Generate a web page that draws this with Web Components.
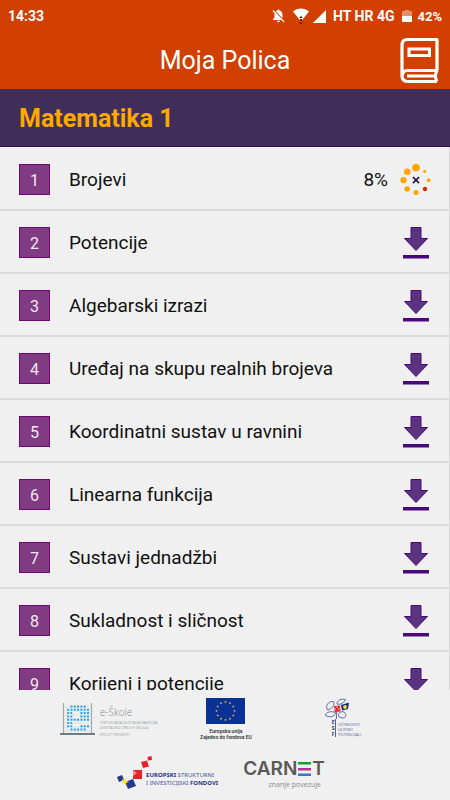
<!DOCTYPE html>
<html lang="hr">
<head>
<meta charset="utf-8">
<meta name="viewport" content="width=device-width, initial-scale=1">
<title>Moja Polica</title>
<style>
  html, body { margin: 0; height: 100%; }
  body { font-family: Roboto, "Liberation Sans", sans-serif; background: #f0f0f0; color: #111; }
</style>
</head>
<body>
<shelf-app></shelf-app>
<script>
const define = (name, html, setup) => {
  const template = document.createElement('template');
  template.innerHTML = html;
  customElements.define(name, class extends HTMLElement {
    constructor() {
      super();
      this.attachShadow({ mode: 'open' }).append(template.content.cloneNode(true));
    }
    connectedCallback() { if (setup) setup(this, this.shadowRoot); }
  });
};

define('status-bar', `
<style>
  :host { display: flex; align-items: center; justify-content: space-between; height: 32px; padding: 0 8px; color: #fff; font-size: 14px; font-weight: 700; }
  .right { display: flex; align-items: center; }
  svg { display: block; }
  .bell { margin-right: 8px; }
  .wifi { margin-right: 4px; }
  .cell { margin-right: 7px; }
  .bat { margin: 0 5px 0 8px; }
  .pct { font-size: 13px; }
</style>
<span>14:33</span>
<div class="right">
  <svg class="bell" width="13" height="14" viewBox="0 0 13 14"><path fill="#fff" d="M6.5 0.5c.7 0 1 .5 1 1.100C9.600 2.100 10.500 4 10.500 6v3.200L3.600 2.300c.5-.4 1.200-.6 1.900-.8 0-.6.300-1 1-1zM2.700 3.900 9.700 11H1v-1l1.500-1.500V6c0-.8.050-1.500.2-2.100zM5 11.700h3c0 1-.7 1.600-1.500 1.600S5 12.700 5 11.700z"/><path d="M.8 1.500 12.200 13" stroke="#fff" stroke-width="1.100"/></svg>
  <svg class="wifi" width="16" height="18" viewBox="0 0 16 18"><path fill="#fff" d="M0 4.500C4.500.5 11.500.5 16 4.500L8 14.500z"/><path fill="#642000" d="M6 11 8 9l2 2zM6 15.500h4l-2 2.500zM7 12h2v2H7z"/></svg>
  <svg class="cell" width="13" height="13" viewBox="0 0 13 13"><path fill="#fff" d="M13 0v13H0z"/></svg>
  <span>HT HR 4G</span>
  <svg class="bat" width="10" height="14" viewBox="0 0 10 14"><path fill="#e48d69" d="M3 1h4v1h3v5H0V2h3z"/><path fill="#fff" d="M0 7h10v6H0z"/></svg>
  <span class="pct">42%</span>
</div>`);

define('app-header', `
<style>
  :host { display: block; background: #d14000; color: #fff; }
  .bar { display: grid; grid-template-columns: 1fr auto 1fr; align-items: center; height: 57px; padding: 0 10px; }
  h1 { grid-column: 2; margin: 0; font-size: 25px; font-weight: 400; line-height: 58px; }
  button { justify-self: end; border: 0; padding: 0; background: none; color: inherit; display: block; }
  svg { display: block; }
</style>
<status-bar></status-bar>
<div class="bar">
  <h1><slot></slot></h1>
  <button aria-label="Polica"><svg width="40" height="48" viewBox="0 0 40 48" fill="none" stroke="#fff" stroke-width="3.200" stroke-linejoin="round">
    <path d="M37 33V2.500H7.500Q2 2.500 2 8v30.500Q2 44.500 7.500 44.500H37"/>
    <path d="M2.500 38.500Q2.500 33.500 7.500 33.500H37Q34 39 37 44.500M7 39H35.500" stroke-width="3"/>
    <path d="M9 12h20.500v6.500H9z" stroke-width="3" stroke-linejoin="miter"/></svg></button>
</div>`);

define('subject-bar', `
<style>
  :host { display: block; background: #402e5a; border-bottom: 1px solid #2c0c4a; padding: 2px 19px 0; color: #ffa800; }
  h2 { margin: 0; font-size: 25px; line-height: 55px; font-weight: 700; }
</style>
<h2><slot></slot></h2>`);

define('download-button', `
<style>
  :host { display: block; }
  button { display: block; border: 0; padding: 0; background: none; }
  svg { display: block; }
</style>
<button aria-label="Preuzmi"><svg width="26" height="32" viewBox="0 0 26 32"><path fill="#5b3480" stroke="#4b087c" d="M8 .5h10V11.500h6.500L13 23.500 1.500 11.500H8z"/><path fill="#4b087c" d="M0 28h26v3.500H0z"/></svg></button>`);

define('download-progress', `
<style>
  :host { display: flex; align-items: center; gap: 12px; font-size: 19px; }
  button { display: block; border: 0; padding: 0; background: none; }
  svg { display: block; }
</style>
<span><slot></slot></span>
<button aria-label="Prekini preuzimanje"><svg width="32" height="32" viewBox="0 0 32 32">
  <g fill="#ffa500"><circle cx="16" cy="3.700" r="3.800"/><circle cx="7.200" cy="7.700" r="3.300"/><circle cx="3.500" cy="16.200" r="3.100"/><circle cx="7.200" cy="25" r="2.800"/><circle cx="16" cy="28.600" r="2.500"/><circle cx="28.700" cy="16.200" r="1.900"/><circle cx="24.700" cy="7.400" r="1.600"/></g>
  <circle cx="25" cy="25" r="2.200" fill="#d52b00"/>
  <path d="m13 13.200 6 6m0-6-6 6" stroke="#2b174d" stroke-width="1.700"/></svg></button>`);

define('chapter-row', `
<style>
  :host { display: flex; align-items: center; box-sizing: border-box; flex: none; height: 63px; padding: 2px 20px 0 19px; border-bottom: 2px solid #dcdcdc; }
  .num { box-sizing: border-box; width: 31px; height: 31px; line-height: 31px; border: 1px solid #6d0876; background: #803b82; color: #f3e8f3; text-align: center; font-size: 16px; }
  .name { flex: 1; margin-left: 19px; font-size: 19px; line-height: 24px; }
  .busy { margin-right: -3px; }
</style>
<span class="num"></span><span class="name"><slot></slot></span>`, (host, root) => {
  root.querySelector('.num').textContent = host.getAttribute('number');
  const progress = host.getAttribute('progress');
  const action = document.createElement(progress ? 'download-progress' : 'download-button');
  if (progress) { action.textContent = progress; action.className = 'busy'; }
  root.append(action);
});

define('chapter-list', `
<style>
  :host { display: flex; flex-direction: column; flex: 1; min-height: 0; overflow: hidden; box-sizing: border-box; padding-top: 1px; border-right: 1px solid #d8d8d8; }
</style>
<slot></slot>`);

define('eskole-logo', `
<style>
  :host { display: flex; gap: 5px; color: #9a9da0; font-family: "Open Sans", sans-serif; }
  svg { display: block; flex: none; }
  b { display: block; font-size: 10px; line-height: 12px; font-weight: 300; color: #888c90; margin: 3px 0 2px; }
  p { margin: 0; font-size: 4px; line-height: 5px; white-space: nowrap; }
  p + p { margin-top: 2px; }
</style>
<svg width="35" height="33" viewBox="0 0 35 33"><path d="M4 4h27M4 8h27M4 12h27M4 16h27M4 20h27M4 24h27M4 28h27" stroke="#d5dadd" stroke-width=".7"/><path d="M3.500 0v30M31.500 0v30" stroke="#a3a9ad" stroke-width="1.200"/><path fill="#6f7b82" d="M0 30h35v2H0z"/><g fill="none" stroke="#2ba2dd" stroke-width="2" stroke-dasharray="2 1.300"><path d="M10.500 3.500H26M7.200 6.800H29M7.200 10.100h5M20.400 10.100H29M7.200 13.400h5M20.400 13.400H29M7.200 16.700H29M7.200 20h5M7.200 23.300h5M20.400 23.300H29M10.500 26.600H26"/></g></svg>
<div><b>e-Škole</b><p>USPOSTAVA SUSTAVA RAZVOJA<br>DIGITALNO ZRELIH ŠKOLA</p><p>(PILOT PROJEKT)</p></div>`);

define('eu-logo', `
<style>
  :host { display: flex; flex-direction: column; align-items: center; gap: 4px; font: 600 5px/6px Roboto, sans-serif; color: #333; text-align: center; white-space: nowrap; }
  svg { display: block; }
</style>
<svg width="39" height="26" viewBox="0 0 39 26"><path fill="#0a3296" d="M0 0h39v26H0z"/><g class="stars" fill="#f5c63c"></g></svg>
<div>Europska unija<br>Zajedno do fondova EU</div>`, (host, root) => {
  const star = (x, y) => {
    const points = Array.from({ length: 10 }, (_, i) => {
      const a = (i * 36 - 90) * Math.PI / 180, r = i % 2 ? .6 : 1.300;
      return (x + r * Math.cos(a)) + ',' + (y + r * Math.sin(a));
    });
    return '<polygon points="' + points.join(' ') + '"/>';
  };
  root.querySelector('.stars').innerHTML = Array.from({ length: 12 }, (_, i) =>
    star(19.500 + 9 * Math.cos(i * Math.PI / 6), 13 + 9 * Math.sin(i * Math.PI / 6))).join('');
});

define('esf-logo', `
<style>
  :host { display: block; width: 36px; font-family: "Open Sans", sans-serif; color: #59639b; }
  svg { display: block; }
  .text { display: flex; line-height: 5px; font-size: 4px; white-space: nowrap; }
  .esf { padding-left: 6px; width: 5px; text-align: center; font-size: 5px; font-weight: 700; color: #29367f; line-height: 6px; }
  .words { border-left: 1px solid #59639b; padding: 3px 0 0 2px; }
</style>
<svg width="26" height="21" viewBox="0 0 26 21"><g fill="none" stroke="#3d4a8b" stroke-width=".8"><path d="M2.500 12C0 8 3 3 8.500 3.500 10 7 7 11 2.500 12zM12 6c0-4 4-5.500 8.500-4.500C19 5 16 7 12 6zM0 17c3-4 7-4 11-2-2 4-7 5-11 2zM14 19c-2-4 2-6 5-5 3 2 2 5 0 6-3 0-4-1-5-1zM11.500 14v7"/></g><path fill="#e7262b" d="m9 8 6-.5.5 6-6 .5z"/><path fill="#fff" opacity=".35" d="M11 8h2v2h-2zm2 2h2v2h-2zM9 10h2v2H9z"/><path fill="#1b2c7b" d="m16 7 8-2.500-1 6.500-6 1.500z"/><circle cx="20" cy="9" r="1.900" fill="#e9dd37"/></svg>
<div class="text"><div class="esf">E<br>S<br>F</div><div class="words">UČINKOVITI<br>LJUDSKI<br>POTENCIJALI</div></div>`);

define('esi-logo', `
<style>
  :host { display: flex; font: 400 6px/8px "Noto Sans", sans-serif; color: #46509a; white-space: nowrap; }
  svg { display: block; flex: none; }
  div { margin: 15px 0 0 -7px; }
  b { font-weight: 700; color: #25328a; }
</style>
<svg width="36" height="34" viewBox="0 0 36 34"><g fill="#e5222a"><path d="m30.500 1 4-1 .5 4-4 .5zM24 6l6-1.500 2 6L26 12zM16 14h9v9h-9z"/></g><path fill="#f08a85" d="m29 5 2-.5-.5 2zM16 14l4 3-4 3z"/><g fill="#26368b"><path d="m0 21 5-2 2 5-5 2zM8 26l8-3 3 7-8 3z"/></g><path fill="#ffe72e" d="m5 23 2 1 2-2v3l3 1-3 1v3l-2-3-3 1 2-2z"/></svg>
<div><b>EUROPSKI</b> STRUKTURNI<br>I INVESTICIJSKI <b>FONDOVI</b></div>`);

define('carnet-logo', `
<style>
  :host { display: block; color: #5a5a5a; }
  .mark { display: flex; align-items: center; font: 600 19px/23px Inter, sans-serif; }
  svg { display: block; margin: 0 1px; }
  .tag { font: 400 7px/10px "Open Sans", sans-serif; color: #888; text-align: right; padding-right: 4px; }
</style>
<div class="mark"><span>CARN</span><svg width="13" height="14" viewBox="0 0 13 14" role="img" aria-label="E"><path fill="#10a42c" d="M0 0h13v2.500H0z"/><path fill="#b8328e" d="M0 6h13v2.500H0z"/><path fill="#3c74c2" d="M0 11.500h13V14H0z"/></svg><span>T</span></div>
<div class="tag">znanje povezuje</div>`);

define('sponsor-footer', `
<style>
  :host { display: block; flex: none; box-sizing: border-box; height: 110px; padding-top: 8px; background: #f0f0f0; }
  .top { display: grid; grid-template-columns: 1fr 1fr 1fr; justify-items: center; align-items: start; padding: 0 48px 0 50px; height: 58px; }
  .top eskole-logo { margin-top: 5px; }
  .bottom { display: flex; justify-content: center; gap: 25px; padding-right: 8px; }
  carnet-logo { margin-top: 1px; }
</style>
<div class="top"><eskole-logo></eskole-logo><eu-logo></eu-logo><esf-logo></esf-logo></div>
<div class="bottom"><esi-logo></esi-logo><carnet-logo></carnet-logo></div>`);

define('shelf-app', `
<style>
  :host { display: flex; flex-direction: column; height: 100vh; overflow: hidden; }
</style>
<app-header>Moja Polica</app-header>
<subject-bar>Matematika 1</subject-bar>
<chapter-list>
  <chapter-row number="1" progress="8%">Brojevi</chapter-row>
  <chapter-row number="2">Potencije</chapter-row>
  <chapter-row number="3">Algebarski izrazi</chapter-row>
  <chapter-row number="4">Uređaj na skupu realnih brojeva</chapter-row>
  <chapter-row number="5">Koordinatni sustav u ravnini</chapter-row>
  <chapter-row number="6">Linearna funkcija</chapter-row>
  <chapter-row number="7">Sustavi jednadžbi</chapter-row>
  <chapter-row number="8">Sukladnost i sličnost</chapter-row>
  <chapter-row number="9">Korijeni i potencije</chapter-row>
</chapter-list>
<sponsor-footer></sponsor-footer>`);
</script>
</body>
</html>
